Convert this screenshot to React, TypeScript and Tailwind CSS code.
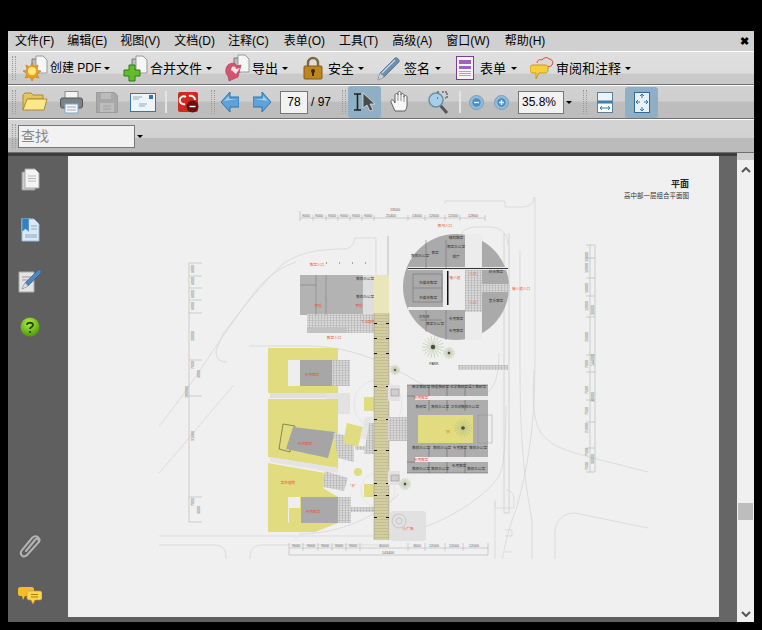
import type { ReactNode } from "react";

const FONT = "font-['Liberation_Sans','Noto_Sans_CJK_SC',sans-serif]";

const menuItems = [
  { label: "文件(F)", ml: "ml-[7px]" },
  { label: "编辑(E)", ml: "ml-[13px]" },
  { label: "视图(V)", ml: "ml-[13px]" },
  { label: "文档(D)", ml: "ml-[14px]" },
  { label: "注释(C)", ml: "ml-[13px]" },
  { label: "表单(O)", ml: "ml-[15px]" },
  { label: "工具(T)", ml: "ml-[14px]" },
  { label: "高级(A)", ml: "ml-[14px]" },
  { label: "窗口(W)", ml: "ml-[14px]" },
  { label: "帮助(H)", ml: "ml-[15px]" },
];

function Grip() {
  return <div className="h-[24px] w-[4px] shrink-0 border-x border-dotted border-[#9a9a9a]" />;
}

function Caret({ className = "" }: { className?: string }) {
  return <div className={`h-0 w-0 shrink-0 border-x-[3px] border-t-[3px] border-x-transparent border-t-black ${className}`} />;
}

function Divider({ className = "" }: { className?: string }) {
  return <div className={`h-[22px] w-[2px] shrink-0 bg-[#e4e4e4] ${className}`} />;
}

function Doc({ x = 0, y = 0 }: { x?: number; y?: number }) {
  return (
    <g transform={`translate(${x} ${y})`}>
      <path d="M2 3h7v14H2z" fill="#bdbdbd" stroke="#7b7b7b" />
      <path d="M6 0h7l4 4v13H6z" fill="#f6f6f6" stroke="#9a9a9a" />
    </g>
  );
}

function CreateIcon() {
  return (
    <svg width="26" height="27" viewBox="0 0 26 27" className="shrink-0">
      <Doc x={8} y={1} />
      <path d="M10 8l2 4 4-2-1 5 4 1-4 3 2 4-5-1-2 4-2-4-5 1 2-4-4-3 4-1-1-5 4 2z" fill="#eea11d" stroke="#b86c10" strokeWidth=".5" />
      <circle cx="10" cy="16" r="4" fill="#ffe97a" />
    </svg>
  );
}

function MergeIcon() {
  return (
    <svg width="26" height="27" viewBox="0 0 26 27" className="shrink-0">
      <Doc x={8} y={1} />
      <path d="M7 10h6v5h5v6h-5v5H7v-5H2v-6h5z" fill="#63bd2a" stroke="#2e7d10" />
    </svg>
  );
}

function ExportIcon() {
  return (
    <svg width="26" height="28" viewBox="0 0 26 28" className="shrink-0">
      <Doc x={8} y={1} />
      <path d="M4 11c3-3 8-2 9 1l4-1-3 12-9 4-1-5C1 20 1 14 4 11z" fill="#d3546f" stroke="#a13a52" strokeWidth=".6" />
      <path d="M8 13c2-1 4 0 4 2l4-1-4 6-5-4z" fill="#f4e3e7" />
    </svg>
  );
}

function LockIcon() {
  return (
    <svg width="20" height="24" viewBox="0 0 20 24" className="shrink-0">
      <path d="M5 11V7a5 5 0 0 1 10 0v4" fill="none" stroke="#7d6a3c" strokeWidth="2.4" />
      <rect x="1" y="10" width="18" height="13" rx="1" fill="#bd8420" stroke="#8a5a10" />
      <circle cx="10" cy="15" r="2" fill="#3c2a08" />
      <path d="M9 16h2v4H9z" fill="#3c2a08" />
    </svg>
  );
}

function PenIcon() {
  return (
    <svg width="24" height="25" viewBox="0 0 24 25" className="shrink-0">
      <path d="M1 24l2-7L18 2c2-1 5 2 4 4L7 21z" fill="#6d8db3" stroke="#49627f" strokeWidth=".7" />
      <path d="M5 17L18 4" stroke="#c9d9ea" strokeWidth="1.2" />
      <path d="M1 24l2-7 4 4z" fill="#cfcfcf" />
    </svg>
  );
}

function FormIcon() {
  return (
    <svg width="18" height="24" viewBox="0 0 18 24" className="shrink-0">
      <rect x=".5" y=".5" width="17" height="23" fill="#f6f2f8" stroke="#7a3f9a" />
      <rect x="3" y="4" width="12" height="4" fill="#a45fc4" />
      <rect x="3" y="10" width="12" height="3" fill="#a45fc4" />
      <path d="M3 15.500h12M3 17.500h12M3 19.500h12" stroke="#aaa" />
    </svg>
  );
}

function CommentIcon() {
  return (
    <svg width="24" height="25" viewBox="0 0 24 25" className="shrink-0">
      <path d="M7 7c0-3 3-4 5-3 2-3 6-3 7-1 3 0 5 3 3 6-1 2-4 2-6 1" fill="#d8d8d8" stroke="#d9482c" />
      <path d="M3 9h12c2 0 3 1 3 3v2c0 2-1 3-3 3H9l-3 6 0-6H3c-2 0-3-1-3-3v-2c0-2 1-3 3-3z" fill="#f6cf3e" stroke="#c99a1c" />
    </svg>
  );
}

function FolderIcon() {
  return (
    <svg width="26" height="20" viewBox="0 0 26 20" className="shrink-0">
      <path d="M1 18V3l2-2h6l2 2h10v4H6z" fill="#e7c65b" stroke="#b08a30" />
      <path d="M1 18L5 7h20l-3 11z" fill="#fbe88d" stroke="#b08a30" />
    </svg>
  );
}

function PrintIcon() {
  return (
    <svg width="23" height="23" viewBox="0 0 23 23" className="shrink-0">
      <rect x="5" y=".5" width="13" height="8" fill="#f3f3f3" stroke="#8a8a8a" />
      <rect x=".5" y="7" width="22" height="10" rx="2" fill="#7b8288" stroke="#555" />
      <rect x="5" y="13" width="13" height="9" fill="#f7f7f7" stroke="#7fa9c9" />
      <path d="M7 16h9M7 19h9" stroke="#9ab" />
    </svg>
  );
}

function SaveIcon() {
  return (
    <svg width="22" height="21" viewBox="0 0 22 21" className="shrink-0">
      <path d="M.5.5h18l3 3v17H.5z" fill="#a8a8a8" stroke="#9c9c9c" />
      <rect x="5" y="1" width="10" height="6" fill="#bcbcbc" />
      <rect x="4" y="11" width="14" height="9" fill="#bdbdbd" />
      <path d="M7 14h8M7 17h8" stroke="#a0a0a0" />
    </svg>
  );
}

function MailIcon() {
  return (
    <svg width="26" height="19" viewBox="0 0 26 19" className="shrink-0">
      <rect x=".5" y=".5" width="25" height="18" fill="#edf4fa" stroke="#3a74a8" />
      <rect x="19" y="2" width="4" height="4" fill="#3a74a8" />
      <path d="M3 4h9M3 6h6M9 11h8M9 13h6" stroke="#9aa9b6" />
    </svg>
  );
}

function RedIcon() {
  return (
    <svg width="21" height="21" viewBox="0 0 21 21" className="shrink-0">
      <rect width="20" height="20" rx="2" fill="#cf2a1e" />
      <path d="M8 5a4 4 0 1 0-1 7M11 4c3-1 6 1 6 4" fill="none" stroke="#fff" strokeWidth="2" />
      <circle cx="14.500" cy="14.500" r="6" fill="#6b1010" />
      <path d="M11.500 14.500h6" stroke="#fff" strokeWidth="1.400" />
    </svg>
  );
}

function ArrowIcon({ flip = false }: { flip?: boolean }) {
  return (
    <svg width="18" height="20" viewBox="0 0 18 20" className="shrink-0">
      <path d={flip ? "M0 5h9V0l9 10-9 10v-5H0z" : "M18 5H9V0L0 10l9 10v-5h9z"} fill="#5da2d8" stroke="#2f75ad" />
      <path d={flip ? "M2 7h8V4l5 5z" : "M16 7H8V4L3 9z"} fill="#9fd0f0" />
    </svg>
  );
}

function SelectIcon() {
  return (
    <svg width="24" height="20" viewBox="0 0 24 20" className="shrink-0">
      <path d="M1 2h7M1 18h7M4.500 2v16" stroke="#222" strokeWidth="1.600" fill="none" />
      <path d="M10 1v15l4-3 3 6 3-1-3-6h5z" fill="#4a4a4a" stroke="#eee" strokeWidth=".7" />
    </svg>
  );
}

function HandIcon() {
  return (
    <svg width="21" height="22" viewBox="0 0 21 22" className="shrink-0">
      <path d="M5 20L1 11c-1-2 2-3 3-1l1 2V4c0-2 3-2 3 0V2c0-2 3-2 3 0v2c0-2 3-2 3 0v2c0-2 3-2 3 0v8c0 3-1 4-2 6z" fill="#f7f7f7" stroke="#555" strokeWidth=".9" />
      <path d="M8 4v6M11 4v6M14 5v6" stroke="#777" strokeWidth=".8" />
    </svg>
  );
}

function ZoomIcon() {
  return (
    <svg width="22" height="23" viewBox="0 0 22 23" className="shrink-0">
      <path d="M13 14l7 8" stroke="#555" strokeWidth="3" />
      <circle cx="9" cy="9" r="7" fill="#a9cfe8" stroke="#6b8fa8" strokeWidth="1.500" />
      <path d="M10 1h2M15 1h5v6h-2M10 7h1" stroke="#333" strokeWidth="1" strokeDasharray="2 1" fill="none" />
    </svg>
  );
}

function RoundIcon({ plus = false }: { plus?: boolean }) {
  return (
    <svg width="15" height="15" viewBox="0 0 15 15" className="shrink-0">
      <circle cx="7.500" cy="7.500" r="7" fill="#8fbcdc" stroke="#7d9db5" />
      <circle cx="7.500" cy="7.500" r="4.200" fill="#4d8dbd" />
      <path d={plus ? "M5 7.500h5M7.500 5v5" : "M5 7.500h5"} stroke="#e8f2fa" strokeWidth="1.400" />
    </svg>
  );
}

function FitWidthIcon() {
  return (
    <svg width="16" height="21" viewBox="0 0 16 21" className="shrink-0">
      <rect x=".5" y=".5" width="15" height="20" fill="#eef3f7" stroke="#5a7f9c" />
      <path d="M1 8.500h14v3H1z" fill="#3f7fb0" />
      <rect x="1" y="12" width="14" height="8" fill="#fff" />
      <path d="M3 16h10M3 16l2-2M3 16l2 2M13 16l-2-2M13 16l-2 2" stroke="#2f75ad" fill="none" />
    </svg>
  );
}

function FitPageIcon() {
  return (
    <svg width="16" height="21" viewBox="0 0 16 21" className="shrink-0">
      <rect x=".5" y=".5" width="15" height="20" fill="#e9f1f8" stroke="#2f6a9a" />
      <path d="M8 2v4M6 4l2-2 2 2M8 19v-4M6 17l2 2 2-2M2 10h4M4 8l-2 2 2 2M14 10h-4M12 8l2 2-2 2" stroke="#2f75ad" fill="none" />
    </svg>
  );
}

function ToolButton({ icon, label, ml, textMl, width, caretMl = "ml-[4px]", size = "text-[13px]" }: { icon: ReactNode; label: string; ml: string; textMl: string; width: string; caretMl?: string; size?: string }) {
  return (
    <div className={`flex items-center ${ml}`}>
      {icon}
      <span className={`${textMl} ${width} ${size} whitespace-nowrap leading-none text-black`}>{label}</span>
      <Caret className={caretMl} />
    </div>
  );
}

function Toolbar({ children, bg }: { children: ReactNode; bg: string }) {
  return (
    <div className={`flex h-[34px] shrink-0 items-center border-t border-t-white border-b border-b-[#6f6f6f] ${bg} pl-[4px]`}>
      {children}
    </div>
  );
}

function SidebarDoc() {
  return (
    <svg width="19" height="23" viewBox="0 0 19 23">
      <path d="M1 4h13v18H1z" fill="#cfcfcf" stroke="#999" />
      <path d="M4 1h10l4 4v15H4z" fill="#f4f4f4" stroke="#aaa" />
      <path d="M7 8h8M7 10.500h8M7 13h8" stroke="#b8b8b8" />
    </svg>
  );
}

function SidebarBookmark() {
  return (
    <svg width="19" height="24" viewBox="0 0 19 24">
      <path d="M1 1h12l5 5v17H1z" fill="#dce9f5" stroke="#9ab8d4" />
      <path d="M1 0h7v14l-3.500-3L1 14z" fill="#2f80c4" stroke="#cde" strokeWidth=".5" />
      <path d="M10 8h6M10 11h6M4 17h12M4 19h12" stroke="#86a9c8" />
    </svg>
  );
}

function SidebarSign() {
  return (
    <svg width="25" height="25" viewBox="0 0 25 25">
      <path d="M1 4h15v20H1z" fill="#e4e4e4" stroke="#aaa" />
      <path d="M4 9h9M4 12h6" stroke="#999" />
      <path d="M4 21l3-6L20 2c2-1 4 1 3 3L10 18z" fill="#4f86bd" stroke="#2b5a88" strokeWidth=".6" />
      <path d="M4 21l3-6 3 3z" fill="#ddd" />
    </svg>
  );
}

function SidebarHelp() {
  return (
    <svg width="20" height="20" viewBox="0 0 20 20">
      <defs>
        <radialGradient id="helpGreen" cx="45%" cy="30%" r="70%">
          <stop offset="0%" stopColor="#b6ee3c" />
          <stop offset="100%" stopColor="#4e9a0c" />
        </radialGradient>
      </defs>
      <circle cx="10" cy="10" r="9.500" fill="url(#helpGreen)" />
      <path d="M7 8c0-3 6-3 6 0 0 2-3 2-3 4" fill="none" stroke="#204a08" strokeWidth="1.800" />
      <circle cx="10" cy="15" r="1.100" fill="#204a08" />
    </svg>
  );
}

function SidebarClip() {
  return (
    <svg width="22" height="24" viewBox="0 0 22 24">
      <path d="M7 16L16 5c3-3 5 0 3 3L8 20c-4 4-8-1-5-5L13 3c4-4 9 0 7 4" fill="none" stroke="#b4b4b4" strokeWidth="2" strokeLinecap="round" />
    </svg>
  );
}

function SidebarChat() {
  return (
    <svg width="24" height="19" viewBox="0 0 24 19">
      <path d="M2 1h12c1 0 2 1 2 2v5c0 1-1 2-2 2H7l-2 4-1-4H2c-1 0-2-1-2-2V3c0-1 1-2 2-2z" fill="#f2bd28" />
      <path d="M11 5h11c1 0 2 1 2 2v5c0 1-1 2-2 2h-5l-2 4-2-4h-2c-1 0-2-1-2-2V7c0-1 1-2 2-2z" fill="#fbd54a" stroke="#d99b14" strokeWidth=".6" />
      <path d="M13 8.500h7M13 11h7" stroke="#b57a10" />
    </svg>
  );
}

function Burst({ x, y, r }: { x: number; y: number; r: number }) {
  const spokes = Array.from({ length: 18 }, (_, i) => (i * Math.PI) / 9);
  return (
    <g>
      {spokes.map((a, i) => (
        <line key={i} x1={x} y1={y} x2={x + Math.cos(a) * r} y2={y + Math.sin(a) * r} stroke="#a9b68c" strokeWidth=".5" />
      ))}
      <circle cx={x} cy={y} r={r * 0.2} fill="#4a4f3a" />
    </g>
  );
}

function Dim({ x, y, t, r = false, c = "#666", s = 3.600 }: { x: number; y: number; t: string; r?: boolean; c?: string; s?: number }) {
  return (
    <text x={x} y={y} fontSize={s} fill={c} textAnchor="middle" transform={r ? `rotate(-90 ${x} ${y})` : undefined}>
      {t}
    </text>
  );
}

const ROAD = "#d2d2d2";
const RED = "#e9542b";

const roomLabels: [number, number, string][] = [
  [456, 239, "辅助教室"],
  [435, 254, "教室"],
  [420, 257, "教师办公室"],
  [456, 248, "教室办公室"],
  [456, 258, "餐厅"],
  [496, 273, "综合教室"],
  [496, 302, "音乐教室"],
  [424, 318, "卫生间"],
  [435, 325, "教室办公室"],
  [456, 320, "专用教室"],
  [456, 332, "专用教室"],
  [421, 388, "数学教研室"],
  [440, 388, "物理教研室"],
  [459, 388, "化学教研室"],
  [477, 388, "语文教研室"],
  [421, 408, "教研室"],
  [440, 408, "教师办公室"],
  [456, 408, "卫生间"],
  [470, 408, "教师办公室"],
  [421, 449, "教师办公室"],
  [442, 449, "教师办公室"],
  [460, 449, "专用教室"],
  [478, 449, "教师办公室"],
  [421, 470, "教师办公室"],
  [440, 470, "教师办公室"],
  [459, 467, "专用教室"],
  [476, 470, "教师办公室"],
];

function Plan() {
  return (
    <svg viewBox="68 156 651 461" className="h-full w-full" fontFamily="'Liberation Sans','Noto Sans CJK SC',sans-serif">
      <defs>
        <pattern id="hatch" width="3" height="2.500" patternUnits="userSpaceOnUse">
          <rect width="3" height="2.500" fill="#d9d9d9" />
          <path d="M0 0h3M0 0v2.500" stroke="#8a8a8a" strokeWidth=".5" />
        </pattern>
        <pattern id="walk" width="4" height="3" patternUnits="userSpaceOnUse">
          <rect width="4" height="3" fill="#d3cda2" />
          <path d="M0 0h4" stroke="#8f8a68" strokeWidth=".5" />
        </pattern>
      </defs>

      <text x="689" y="187" fontSize="9" fontWeight="700" textAnchor="end" fill="#222" fontFamily="'Liberation Serif','Noto Sans CJK SC',serif">平面</text>
      <text x="689" y="198" fontSize="6.500" textAnchor="end" fill="#333">高中部一层组合平面图</text>

      {/* roads */}
      <g fill="none" stroke={ROAD} strokeWidth=".7">
        <path d="M355 238h21v78M355 238c-1 6-4 10-10 11-22 0-44 2-62 15-22 20-42 46-60 70l-6 14c-3 8 1 14 10 14" />
        <path d="M296 262c-24 8-35 22-50 42-30 40-60 90-87 122M159 473c35-40 50-60 75-88" />
        <path d="M249 346h60c30 0 60 10 80 20 40 20 60 40 90 32 15-6 20-20 20-45" />
        <path d="M159 536h228c50-5 100-40 112-60 6-10 7-50 7-70" />
        <path d="M159 545h55c8 0 12 4 12 12v2M250 559c0-8 2-14 12-14h120" />
        <path d="M508 245c0-12-8-18-18-18h-14c-12 0-16 6-16 18v8M445 204v-3h60v6h16c10 0 13-4 13-10" />
        <path d="M535 197v150c0 60-2 100-18 160-10 25-12 40-15 52M520 250v110c0 40 0 100 12 160 0 0 0 20 0 39" />
        <path d="M534 370c-2 40 0 60 14 70 10 10 30 14 100 32M555 559v-26c0-12 8-20 20-20l73 15" />
        <path d="M506 490c5 0 8 4 8 10v8h-14c-5 0-5 0-5-6M495 500v59M505 530h7v6h-7M505 552h7" />
        <path d="M399 494c-30 30-70 40-100 40" />
      </g>
      <path d="M504 233v280h5V233" fill="none" stroke="#c4c4c4" strokeWidth=".6" />
      <rect x="387" y="236" width="2" height="39" fill="#d6d6d6" />

      {/* top left hall */}
      <rect x="300" y="275" width="63" height="40" fill="#b3b3b3" />
      <rect x="363" y="275" width="12" height="40" fill="#dedede" />
      <rect x="307" y="314" width="67" height="19" fill="url(#hatch)" />
      <rect x="307" y="327" width="40" height="6" fill="#c2c2c2" />
      <path d="M326 275v40M316 275v40M300 285h16" stroke="#777" strokeWidth=".5" />
      <path d="M326 263h50" stroke="#555" strokeWidth="1" strokeDasharray="1 12" />
      <Dim x={317} y={266} t="教室入口" c={RED} />
      <Dim x={318} y={307} t="管理" c={RED} />
      <Dim x={359} y={307} t="管理" c={RED} />
      <Dim x={334} y={339} t="教室入口" c={RED} />
      <Dim x={368} y={323} t="下沉庭院" c={RED} />
      <Dim x={365} y={280} t="教师办公室" c="#333" />
      <Dim x={365} y={298} t="教师办公室" c="#333" />

      {/* yellow blocks */}
      <path d="M268 348h70v45h-70z" fill="#e0dc7f" />
      <path d="M270 393h68v5h-68z" fill="#dfdfdf" />
      <path d="M326 393h24v21h-24z" fill="#e2e2e2" />
      <path d="M288 360h12v26h-12z" fill="#eeeeee" />
      <rect x="300" y="360" width="32" height="26" fill="#a7a7a7" />
      <rect x="332" y="360" width="18" height="26" fill="url(#hatch)" />
      <Dim x={312} y={376} t="专用教室" c={RED} />

      <path d="M268 399h70v69l-70-11z" fill="#e0dc7f" />
      <path d="M283 424l12 2-5 26-11-3z" fill="#e0dc7f" stroke="#333" strokeWidth=".5" />
      <path d="M293 427l42 5-7 26-42-9z" fill="#a5a5a5" />
      <path d="M333 433l10 2 11 6v21l-16-4z" fill="url(#hatch)" />
      <path d="M347 423l16 4-5 20-15-4z" fill="#e0dc7f" />
      <path d="M270 457l68 11v5l-68-11z" fill="#e4e4e4" />
      <Dim x={305} y={445} t="专用教室" c={RED} />

      <path d="M268 463l57 10-2 15 15 9v26l-23 9h-47z" fill="#e0dc7f" />
      <path d="M325 471l23 7-4 13-21-4z" fill="url(#hatch)" />
      <rect x="288" y="497" width="12" height="26" fill="#eeeeee" />
      <rect x="289" y="508" width="12" height="15" fill="#e0dc7f" />
      <rect x="301" y="497" width="37" height="26" fill="#a9a9a9" />
      <rect x="338" y="497" width="13" height="26" fill="url(#hatch)" />
      <rect x="350" y="507" width="26" height="5" fill="url(#hatch)" />
      <Dim x={313} y={513} t="专用教室" c={RED} />
      <Dim x={288} y={484} t="室外庭院" c={RED} />
      <Dim x={353} y={487} t="“水”" c={RED} />
      <circle cx="358" cy="472" r="4" fill="#e0dc7f" />
      <path d="M365 417l8 0-5 22-8 0z" fill="#e6e6e6" />
      <rect x="355" y="446" width="19" height="4" fill="url(#hatch)" />
      <path d="M369 423h6v31h-11z" fill="url(#hatch)" />
      <rect x="364" y="397" width="13" height="14" fill="#e0dc7f" />
      <rect x="364" y="484" width="13" height="13" fill="#e0dc7f" />
      <circle cx="378" cy="404" r="24" fill="none" stroke="#d6d6d6" strokeWidth=".5" />
      <circle cx="378" cy="490" r="17" fill="none" stroke="#d6d6d6" strokeWidth=".5" />

      {/* central walk */}
      <rect x="374" y="275" width="15" height="38" fill="#eae6bc" />
      <rect x="374" y="313" width="15" height="227" fill="url(#walk)" />
      <path d="M374 313v227M389 313v227" stroke="#888" strokeWidth=".4" />
      <g fill="#111">
        {[323, 338, 353, 386, 419, 450, 483, 495, 517].map((y) => (
          <g key={y}>
            <rect x="374" y={y} width="3" height="1" />
            <rect x="386" y={y} width="3" height="1" />
          </g>
        ))}
      </g>

      <rect x="388" y="385" width="12" height="16" fill="#e3e3e3" />
      <rect x="391" y="389" width="8" height="7" fill="#cfcfcf" stroke="#777" strokeWidth=".4" />
      <rect x="388" y="471" width="12" height="14" fill="#e3e3e3" />
      <rect x="391" y="475" width="8" height="6" fill="#cfcfcf" stroke="#777" strokeWidth=".4" />
      <rect x="390" y="511" width="36" height="30" rx="3" fill="#e1e1e1" />
      <circle cx="399" cy="521" r="7" fill="none" stroke="#b5b5b5" strokeWidth=".6" />
      <circle cx="399" cy="521" r="3" fill="none" stroke="#b5b5b5" strokeWidth=".6" />
      <Dim x={408} y={530} t="小广场" c={RED} />

      {/* right court */}
      <rect x="388" y="417" width="27" height="24" fill="url(#hatch)" />
      <rect x="407" y="385" width="81" height="88" fill="#adadad" />
      <rect x="415" y="396" width="73" height="4" fill="#ececec" />
      <rect x="415" y="457" width="73" height="5" fill="#ececec" />
      <rect x="418" y="415" width="55" height="28" fill="#e0dc7f" />
      <path d="M429 385v11M447 385v11M465 385v11M429 400v11M447 400v11M465 400v11M429 447v10M447 447v10M465 447v10M429 462v11M447 462v11M465 462v11M407 396h8M407 462h8M407 385h81M407 473h81" stroke="#555" strokeWidth=".5" />
      <Dim x={421} y={399} t="专用教室" c={RED} />
      <Dim x={421} y={461} t="专用教室" c={RED} />
      <Dim x={448} y={433} t="“水”" c={RED} />
      <Burst x={463} y={428} r={9} />
      <rect x="478" y="415" width="14" height="28" fill="none" stroke="#888" strokeWidth=".4" />

      {/* round building */}
      <circle cx="456" cy="287" r="53" fill="#aaaaaa" />
      <rect x="443" y="270" width="22" height="37" fill="#ececec" />
      <path d="M465 234h17v106h-17z" fill="#ececec" />
      <rect x="465" y="268" width="17" height="44" fill="url(#hatch)" />
      <rect x="408" y="267" width="100" height="3" fill="#ececec" />
      <rect x="408" y="307" width="57" height="3" fill="#ececec" />
      <rect x="482" y="284" width="28" height="8" fill="url(#hatch)" />
      <rect x="447" y="271" width="1.500" height="34" fill="#111" />
      <rect x="408" y="268" width="100" height="1" fill="#333" />
      <path d="M413 274h29v28h-29zM413 288h29M426 240v28M446 240v28M446 310v30M426 310v22M420 320h22" fill="none" stroke="#666" strokeWidth=".5" />
      <Dim x={428} y={284} t="多媒体教室" c="#333" />
      <Dim x={428} y={299} t="多媒体教室" c="#333" />
      <Dim x={455} y={279} t="接入庭" c={RED} />
      <Dim x={473} y={275} t="入口" c={RED} />
      <Dim x={473} y={304} t="入口" c={RED} />
      <Dim x={521} y={290} t="接入庭入口" c={RED} />
      <Dim x={445} y={227} t="图书入口" c={RED} />
      {roomLabels.map(([x, y, t], i) => (
        <Dim key={i} x={x} y={y} t={t} c="#333" />
      ))}

      <Burst x={433} y={347} r={11} />
      <Burst x={449} y={353} r={6} />
      <Burst x={395} y={370} r={5} />
      <Burst x={405} y={484} r={6} />
      <rect x="458" y="365" width="50" height="5" fill="url(#hatch)" />
      <Dim x={434} y={365} t="PARK" c="#333" s={3.500} />

      {/* dimensions */}
      <g stroke="#a8a8a8" strokeWidth=".5" fill="none">
        <path d="M300 218h185M300 211v10M313 215v6M326 215v6M338 215v6M350 215v6M362 215v6M374 215v6M408 215v6M425 215v6M445 215v6M460 215v6M485 215v6" />
        <path d="M189 263v259M189 263h13M189 276h13M189 288h13M189 300h13M189 313h13M189 360h13M189 396h13M189 497h13M189 522h13" />
        <path d="M590 245v227M595 245v227M586 245h9M586 258h9M586 278h9M586 296h9M586 317h9M586 355h9M586 372h9M586 400h9M586 422h9M586 448h9M586 472h9" />
        <path d="M289 548h199M289 555h199M289 543v12M303 543v8M318 543v8M332 543v8M346 543v8M360 543v8M408 543v8M425 543v8M445 543v8M463 543v8M488 543v12" />
      </g>
      <g>
        {[[306, "9000"], [319, "9000"], [332, "9000"], [344, "9000"], [356, "9000"], [368, "9000"], [391, "25400"], [417, "13000"], [434, "12600"], [453, "12000"], [473, "12800"]].map(([x, t]) => (
          <Dim key={String(x)} x={Number(x)} y={217} t={String(t)} />
        ))}
        <Dim x={395} y={211} t="13500" />
        {[[296, "9000"], [311, "9000"], [325, "9000"], [339, "9000"], [353, "9000"], [384, "40000"], [417, "3600"], [434, "12000"], [454, "12000"], [474, "12000"]].map(([x, t]) => (
          <Dim key={String(x)} x={Number(x)} y={547} t={String(t)} />
        ))}
        <Dim x={388} y={554} t="143400" />
        {[[269, "9000"], [281, "9000"], [294, "9000"], [306, "9000"], [336, "20000"], [365, "7000"], [436, "31900"], [502, "7000"]].map(([y, t]) => (
          <Dim key={String(y)} x={194} y={Number(y)} t={String(t)} r />
        ))}
        <Dim x={188} y={392} t="180000" r />
        <Dim x={200} y={510} t="3000" r />
        <Dim x={200} y={374} t="3000" r />
        {[[257, "12000"], [268, "12000"], [288, "19000"], [306, "12000"], [337, "15000"], [364, "7000"], [390, "7500"], [411, "7500"], [428, "21000"], [452, "7500"], [466, "7500"]].map(([y, t]) => (
          <Dim key={String(y)} x={588} y={Number(y)} t={String(t)} r />
        ))}
        <Dim x={594} y={310} t="30000" r />
        <Dim x={594} y={360} t="144000" r />
        <Dim x={594} y={397} t="30000" r />
        <Dim x={594} y={459} t="30000" r />
      </g>
    </svg>
  );
}

export default function App() {
  return (
    <div className={`flex h-[630px] w-[762px] flex-col bg-black pt-[31px] pr-2 pb-2 pl-2 ${FONT}`}>
      <div className="flex h-[20px] shrink-0 items-center justify-between bg-[#d0d0d0]">
        <div className="flex items-center">
          {menuItems.map((m) => (
            <span key={m.label} className={`${m.ml} text-[12px] leading-none whitespace-nowrap text-black`}>
              {m.label}
            </span>
          ))}
        </div>
        <span className="mr-[5px] text-[11px] leading-none font-bold text-black">✖</span>
      </div>

      <Toolbar bg="bg-[linear-gradient(#dfdfdf_0,#dcdcdc_66%,#c9c9c9_70%,#c9c9c9_100%)]">
        <Grip />
        <ToolButton icon={<CreateIcon />} label="创建 PDF" ml="ml-[6px]" textMl="ml-[2px]" width="w-[50px]" size="text-[12px]" />
        <ToolButton icon={<MergeIcon />} label="合并文件" ml="ml-[12px]" textMl="ml-[2px]" width="w-[52px]" />
        <ToolButton icon={<ExportIcon />} label="导出" ml="ml-[12px]" textMl="ml-[2px]" width="w-[26px]" />
        <ToolButton icon={<LockIcon />} label="安全" ml="ml-[15px]" textMl="ml-[5px]" width="w-[26px]" />
        <ToolButton icon={<PenIcon />} label="签名" ml="ml-[13px]" textMl="ml-[3px]" width="w-[26px]" caretMl="ml-[5px]" />
        <ToolButton icon={<FormIcon />} label="表单" ml="ml-[15px]" textMl="ml-[6px]" width="w-[26px]" caretMl="ml-[5px]" />
        <ToolButton icon={<CommentIcon />} label="审阅和注释" ml="ml-[13px]" textMl="ml-[2px]" width="w-[65px]" />
      </Toolbar>

      <Toolbar bg="bg-[linear-gradient(#d2d2d2_0,#cfcfcf_46%,#bdbdbd_52%,#bdbdbd_100%)]">
        <Grip />
        <div className="ml-[6px]"><FolderIcon /></div>
        <div className="ml-[12px]"><PrintIcon /></div>
        <div className="ml-[13px]"><SaveIcon /></div>
        <div className="ml-[12px]"><MailIcon /></div>
        <Divider className="ml-[9px]" />
        <div className="ml-[11px]"><RedIcon /></div>
        <div className="ml-[12px]"><Grip /></div>
        <div className="ml-[6px]"><ArrowIcon /></div>
        <div className="ml-[14px]"><ArrowIcon flip /></div>
        <div className="ml-[9px] flex h-[23px] w-[28px] shrink-0 items-center justify-center border border-[#777] bg-[#f2f2f2] text-[12px] leading-none text-black">78</div>
        <span className="ml-[3px] w-[23px] text-[12px] leading-none whitespace-nowrap text-black">/ 97</span>
        <div className="ml-[8px]"><Grip /></div>
        <div className="ml-[2px] flex h-[32px] w-[33px] shrink-0 items-center justify-center rounded-[3px] bg-[#8eafc4]"><SelectIcon /></div>
        <div className="ml-[9px]"><HandIcon /></div>
        <div className="ml-[16px]"><ZoomIcon /></div>
        <Divider className="ml-[10px]" />
        <div className="ml-[8px]"><RoundIcon /></div>
        <div className="ml-[10px]"><RoundIcon plus /></div>
        <div className="ml-[9px] flex h-[23px] w-[46px] shrink-0 items-center border border-[#777] bg-[#f2f2f2] pl-[3px] text-[12px] leading-none text-black">35.8%</div>
        <Caret className="ml-[2px]" />
        <div className="ml-[11px]"><Grip /></div>
        <div className="ml-[10px]"><FitWidthIcon /></div>
        <div className="ml-[12px] flex h-[31px] w-[33px] shrink-0 items-center justify-center rounded-[3px] bg-[#8eafc4]"><FitPageIcon /></div>
      </Toolbar>

      <Toolbar bg="bg-[linear-gradient(#d4d4d4_0,#d2d2d2_54%,#bbbbbb_58%,#bbbbbb_100%)]">
        <Grip />
        <div className="ml-[2px] flex h-[23px] w-[117px] shrink-0 items-center border border-[#777] bg-[#f2f2f2] pl-[2px] text-[14px] leading-none text-[#888]">查找</div>
        <Caret className="ml-[2px]" />
      </Toolbar>

      <div className="flex min-h-0 flex-1 flex-col">
        <div className="flex min-h-0 flex-1">
          <div className="flex min-w-0 flex-1 flex-col">
            <div className="h-[3px] shrink-0 bg-[#3d3d3d]" />
            <div className="flex min-h-0 flex-1 bg-[#5f5f5f]">
              <div className="flex w-[60px] shrink-0 flex-col items-center justify-between pt-[12px] pr-[16px] pb-[17px]">
                <div className="flex flex-col items-center">
                  <SidebarDoc />
                  <div className="mt-[27px]"><SidebarBookmark /></div>
                  <div className="mt-[26px]"><SidebarSign /></div>
                  <div className="mt-[24px]"><SidebarHelp /></div>
                </div>
                <div className="flex flex-col items-center gap-[27px]">
                  <SidebarClip />
                  <SidebarChat />
                </div>
              </div>
              <div className="mb-[5px] w-[651px] shrink-0 bg-[#f0f0f0]">
                <Plan />
              </div>
              <div className="w-[18px] shrink-0 bg-[#666666]" />
            </div>
          </div>
          <div className="flex w-[17px] shrink-0 flex-col items-center bg-[#f0f0f0]">
            <div className="h-[7px] w-full bg-[#cdcdcd]" />
            <svg width="10" height="6" viewBox="0 0 10 6" className="mt-[7px]">
              <path d="M1 5l4-4 4 4" fill="none" stroke="#555" strokeWidth="2" />
            </svg>
            <div className="mt-[330px] h-[17px] w-[15px] bg-[#bdbdbd]" />
            <svg width="10" height="6" viewBox="0 0 10 6" className="mt-auto mb-[5px]">
              <path d="M1 1l4 4 4-4" fill="none" stroke="#555" strokeWidth="2" />
            </svg>
          </div>
        </div>
      </div>
    </div>
  );
}
